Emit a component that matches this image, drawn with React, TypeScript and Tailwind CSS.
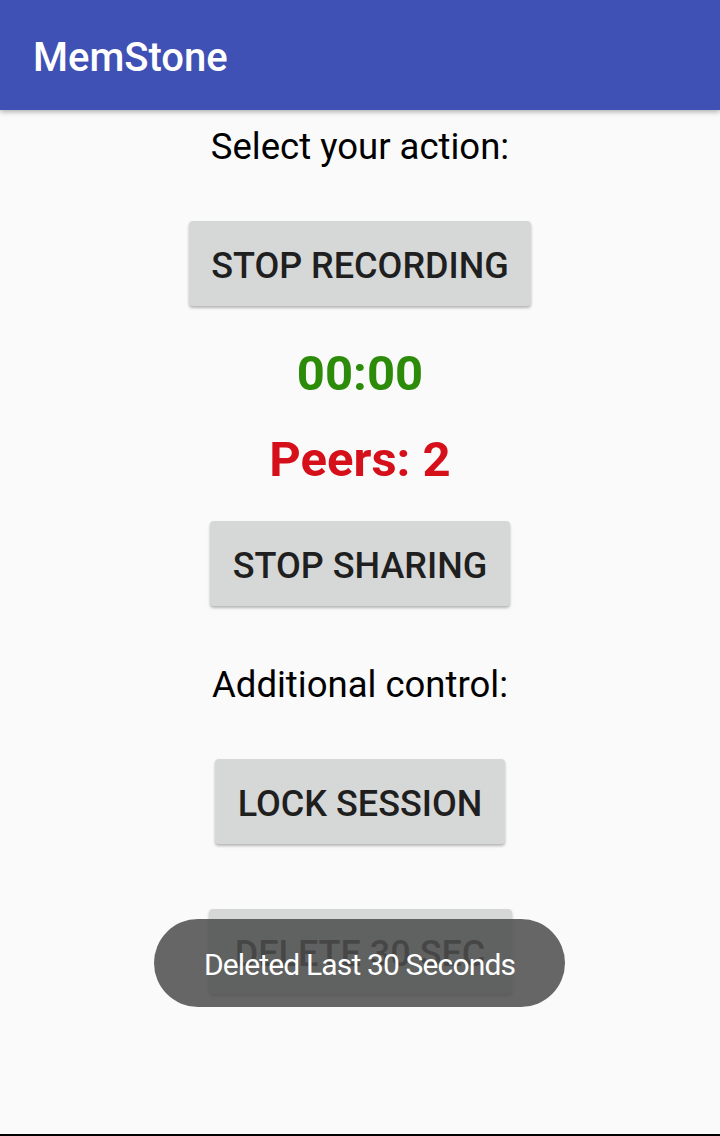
export default function App() {
  const font = { fontFamily: 'Roboto, "Noto Sans", sans-serif' };

  const buttonClass =
    'mx-auto flex h-[85px] items-center justify-center rounded-[4px] bg-[#d6d7d7] pt-[5px] text-[36px] font-medium leading-none text-[#1f1f1f] shadow-[0_2px_3px_rgba(0,0,0,0.28)]';

  return (
    <div className="relative h-[1136px] w-[720px] overflow-hidden bg-[#fafafa] font-['Roboto',sans-serif]">
      {/* app bar */}
      <header className="relative z-10 flex h-[110px] items-center bg-[#3f51b5] pl-[33px] shadow-[0_2px_5px_rgba(0,0,0,0.3)]">
        <h1 className="pt-[6px] text-[40px] font-medium leading-none text-white">MemStone</h1>
      </header>

      <main className="flex flex-col items-center">
        <p className="mt-[19px] h-[37px] text-[36.5px] leading-none text-black">Select your action:</p>

        <button className={`${buttonClass} mt-[55px] w-[342px]`}>STOP RECORDING</button>

        <p className="mt-[43px] h-[50px] text-[49px] font-bold leading-none text-[#2c8c0a]">00:00</p>
        <p className="mt-[36px] h-[50px] text-[49px] font-bold leading-none text-[#d5101a]">Peers: 2</p>

        <button className={`${buttonClass} mt-[36px] w-[300px]`}>STOP SHARING</button>

        <p className="mt-[61px] h-[37px] text-[36.5px] leading-none text-black">Additional control:</p>

        <button className={`${buttonClass} mt-[55px] w-[290px]`}>LOCK SESSION</button>

        <button className={`${buttonClass} mt-[65px] w-[303px]`}>DELETE 30 SEC</button>
      </main>

      {/* toast */}
      <div
        className="absolute left-[154px] top-[919px] flex h-[88px] w-[411px] items-center justify-center rounded-full bg-[rgba(77,77,77,0.86)]"
        style={font}
      >
        <span className="pt-[3px] text-[30px] leading-none tracking-[-0.85px] text-white">Deleted Last 30 Seconds</span>
      </div>

      <div className="absolute bottom-0 left-0 h-[2px] w-full bg-black" />
    </div>
  );
}
